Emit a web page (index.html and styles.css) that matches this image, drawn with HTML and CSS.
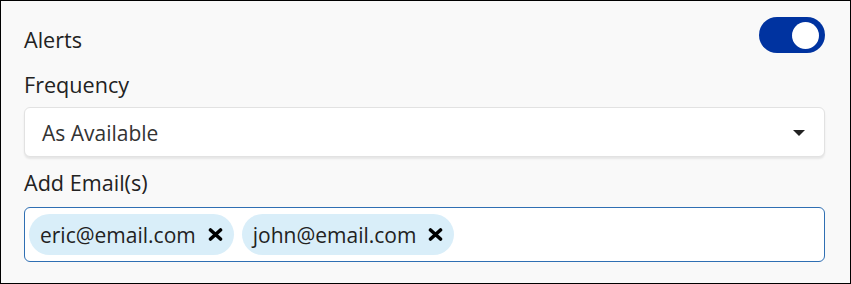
FILE: index.html
```html
<!DOCTYPE html>
<html>
<head>
<meta charset="utf-8">
<link rel="stylesheet" href="styles.css">
</head>
<body>
<div class="panel">
  <div class="alerts-row">
    <span class="label">Alerts</span>
    <div class="toggle"><span class="knob"></span></div>
  </div>
  <div class="label freq-label">Frequency</div>
  <div class="select">
    <span class="select-text">As Available</span>
    <svg class="caret" width="12" height="6" viewBox="0 0 12 6"><path d="M0 0H12L6 6Z" fill="#222"/></svg>
  </div>
  <div class="label email-label">Add Email(s)</div>
  <div class="email-input">
    <span class="chip">eric@email.com<svg class="x" width="15" height="13" viewBox="0 0 15 13"><path d="M2.5 2L12.5 11M12.5 2L2.5 11" stroke="#000" stroke-width="3.6" stroke-linecap="round"/></svg></span>
    <span class="chip">john@email.com<svg class="x" width="15" height="13" viewBox="0 0 15 13"><path d="M2.5 2L12.5 11M12.5 2L2.5 11" stroke="#000" stroke-width="3.6" stroke-linecap="round"/></svg></span>
  </div>
</div>
</body>
</html>
```

FILE: styles.css
```css
html, body {
  margin: 0;
  padding: 0;
}
body {
  font-family: "Open Sans", "Noto Sans", sans-serif;
  color: #222;
}
.panel {
  box-sizing: border-box;
  width: 851px;
  height: 284px;
  border: 1px solid #000;
  background: #f9f9f9;
  padding: 16px 25px 0 23px;
}
.label {
  font-size: 21.6px;
  line-height: 28px;
  color: #222;
}
.alerts-row {
  display: flex;
  justify-content: space-between;
  align-items: flex-end;
  height: 37px;
}
.toggle {
  align-self: flex-start;
  box-sizing: border-box;
  width: 66px;
  height: 36px;
  border-radius: 18px;
  background: #0033a0;
  display: flex;
  align-items: center;
  justify-content: flex-end;
  padding-right: 6px;
}
.knob {
  width: 27px;
  height: 27px;
  border-radius: 50%;
  background: #fff;
}
.freq-label {
  margin-top: 17px;
}
.select {
  margin-top: 8px;
  box-sizing: border-box;
  height: 50px;
  background: #fff;
  border: 1px solid #e2e2e2;
  border-radius: 6px;
  box-shadow: 0 2px 2px rgba(0,0,0,0.08);
  display: flex;
  align-items: center;
  justify-content: space-between;
  padding: 0 19px 0 17px;
}
.select-text {
  font-size: 21px;
  color: #333;
  padding-top: 1px;
}
.caret {
  display: block;
  margin-top: 1px;
}
.email-label {
  margin-top: 12px;
}
.email-input {
  margin-top: 10px;
  box-sizing: border-box;
  height: 55px;
  width: 801px;
  background: #fff;
  border: 1.5px solid #2f6fb3;
  border-radius: 6px;
  display: flex;
  align-items: center;
  gap: 8px;
  padding: 0 4px;
}
.chip {
  display: flex;
  align-items: center;
  gap: 12px;
  height: 41px;
  box-sizing: border-box;
  padding: 0 11px;
  border-radius: 21px;
  background: #d9eef9;
  font-size: 21px;
  color: #222;
}
.x {
  display: block;
}
```
